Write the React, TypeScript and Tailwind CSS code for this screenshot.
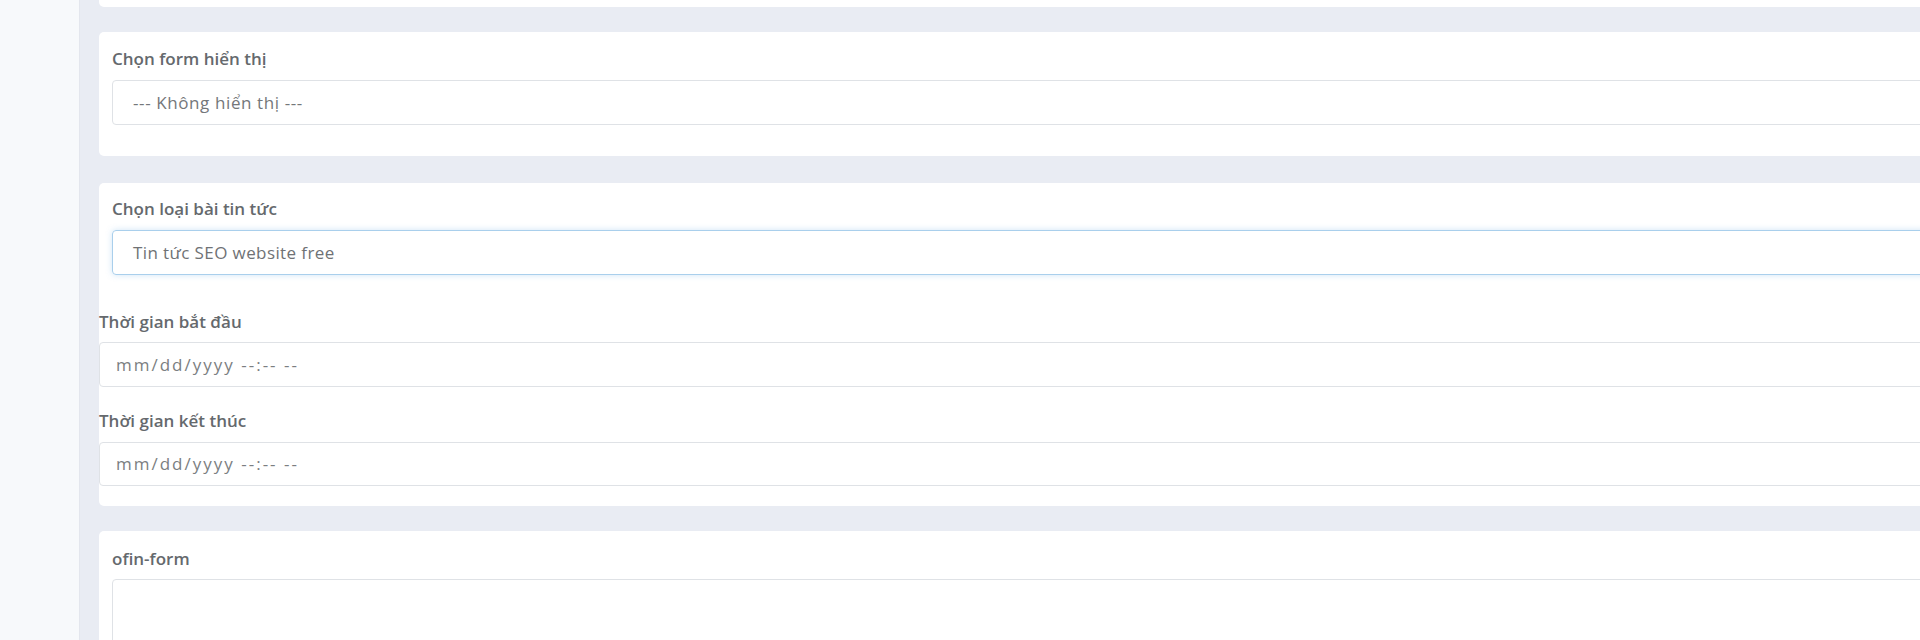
export default function App() {
  const font = { fontFamily: "'Open Sans', 'Noto Sans', sans-serif" };

  return (
    <div
      className="flex h-[640px] w-[1920px] overflow-hidden bg-[#e9ecf3]"
      style={font}
    >
      <aside className="h-full w-[80px] shrink-0 border-r border-[#e3e6ed] bg-[#f7f9fb]" />

      <main className="flex shrink-0 flex-col pl-[19px]">
        {/* tail of the card above */}
        <div className="h-[7px] w-[1880px] shrink-0 rounded-b-[5px] bg-white" />

        {/* Chọn form hiển thị */}
        <section className="mt-[25px] w-[1880px] shrink-0 rounded-[5px] bg-white px-[13px] pt-[15px] pb-[31px]">
          <label className="mb-[9px] block text-[17px] leading-[24px] font-semibold text-[#65696d]">
            Chọn form hiển thị
          </label>
          <div className="flex h-[45px] items-center rounded-[4px] border border-[#dfe2e6] px-[20px] text-[17px] tracking-[0.6px] text-[#74777a]">
            --- Không hiển thị ---
          </div>
        </section>

        {/* Chọn loại bài tin tức + dates */}
        <section className="mt-[27px] w-[1880px] shrink-0 rounded-[5px] bg-white pt-[14px] pb-[20px]">
          <div className="px-[13px]">
            <label className="mb-[9px] block text-[17px] leading-[24px] font-semibold text-[#65696d]">
              Chọn loại bài tin tức
            </label>
            <div className="flex h-[45px] items-center rounded-[4px] border border-[#a9cfec] px-[20px] text-[17px] tracking-[0.4px] text-[#6f7275] shadow-[0_0_6px_rgba(120,180,230,0.35)]">
              Tin tức SEO website free
            </div>
          </div>

          <label className="mt-[35px] mb-[8px] block text-[17px] leading-[24px] font-semibold text-[#65696d]">
            Thời gian bắt đầu
          </label>
          <div className="flex h-[45px] items-center rounded-[4px] border border-[#dfe2e6] px-[16px] text-[17px] tracking-[2px] text-[#7b7e81]">
            mm/dd/yyyy --:-- --
          </div>

          <label className="mt-[22px] mb-[9px] block text-[17px] leading-[24px] font-semibold text-[#65696d]">
            Thời gian kết thúc
          </label>
          <div className="flex h-[44px] items-center rounded-[4px] border border-[#dfe2e6] px-[16px] text-[17px] tracking-[2px] text-[#7b7e81]">
            mm/dd/yyyy --:-- --
          </div>
        </section>

        {/* ofin-form */}
        <section className="mt-[25px] w-[1880px] shrink-0 rounded-[5px] bg-white px-[13px] pt-[16px] pb-[20px]">
          <label className="mb-[8px] block text-[17px] leading-[24px] font-semibold text-[#65696d]">
            ofin-form
          </label>
          <div className="h-[120px] rounded-[4px] border border-[#dfe2e6]" />
        </section>
      </main>
    </div>
  );
}
